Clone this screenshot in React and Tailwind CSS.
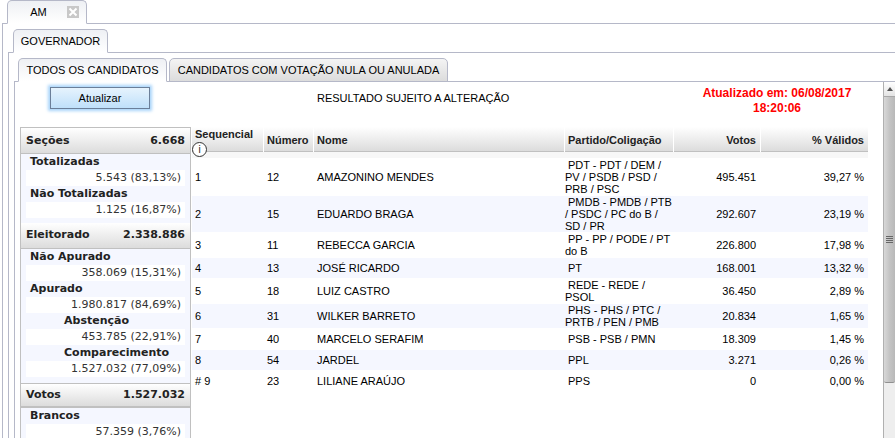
import React from 'react';

const sans = "font-['Liberation_Sans',Arial,sans-serif]";
const headGrad = 'bg-gradient-to-b from-white to-[#dcdcdc]';

const candidatos = [
  { seq: '1', num: '12', nome: 'AMAZONINO MENDES', partido: 'PDT - PDT / DEM / PV / PSDB / PSD / PRB / PSC', votos: '495.451', pct: '39,27 %', h: 'h-[38px]' },
  { seq: '2', num: '15', nome: 'EDUARDO BRAGA', partido: 'PMDB - PMDB / PTB / PSDC / PC do B / SD / PR', votos: '292.607', pct: '23,19 %', h: 'h-[36px]' },
  { seq: '3', num: '11', nome: 'REBECCA GARCIA', partido: 'PP - PP / PODE / PT do B', votos: '226.800', pct: '17,98 %', h: 'h-[26px]' },
  { seq: '4', num: '13', nome: 'JOSÉ RICARDO', partido: 'PT', votos: '168.001', pct: '13,32 %', h: 'h-[20px]' },
  { seq: '5', num: '18', nome: 'LUIZ CASTRO', partido: 'REDE - REDE / PSOL', votos: '36.450', pct: '2,89 %', h: 'h-[26px]' },
  { seq: '6', num: '31', nome: 'WILKER BARRETO', partido: 'PHS - PHS / PTC / PRTB / PEN / PMB', votos: '20.834', pct: '1,65 %', h: 'h-[24px]' },
  { seq: '7', num: '40', nome: 'MARCELO SERAFIM', partido: 'PSB - PSB / PMN', votos: '18.309', pct: '1,45 %', h: 'h-[22px]' },
  { seq: '8', num: '54', nome: 'JARDEL', partido: 'PPL', votos: '3.271', pct: '0,26 %', h: 'h-[20px]' },
  { seq: '# 9', num: '23', nome: 'LILIANE ARAÚJO', partido: 'PPS', votos: '0', pct: '0,00 %', h: 'h-[22px]' },
];

const cols = 'grid grid-cols-[71px_49px_250px_108px_86px_107px] gap-x-px';

const Tab = ({ children, active, className = '' }) => (
  <div
    className={`flex items-center justify-center rounded-t-[5px] border border-[#b5b8c8] ${
      active ? 'border-b-white bg-gradient-to-b from-[#eef0f4] to-white' : 'bg-gradient-to-b from-[#f4f4f4] to-[#dcdcdc]'
    } ${className}`}
  >
    {children}
  </div>
);

const PanelHead = ({ label, value, className = 'h-[26px]' }) => (
  <div className={`flex items-center justify-between border-b border-[#c0c0c0] px-[5px] text-[11px] font-bold text-[#222] ${headGrad} ${className}`}>
    <span>{label}</span>
    <span>{value}</span>
  </div>
);

const Stat = ({ label, value, indent }) => (
  <div>
    <div className={`h-[16px] text-[11px] font-bold leading-[16px] text-[#222] ${indent ? 'pl-[43px]' : 'pl-[9px]'}`}>{label}</div>
    <div className="mx-[5px] h-[16px] bg-white pr-[4px] text-right text-[11px] leading-[16px] text-[#333]">{value}</div>
  </div>
);

const Scrollbar = () => (
  <div className="flex w-[12px] shrink-0 flex-col border-l border-[#b0b0b0] bg-[#eeeeee]">
    <div className="flex h-[15px] items-center justify-center border-b border-[#a8a8a8] bg-gradient-to-b from-white to-[#e4e4e4]">
      <div className="h-0 w-0 border-x-[3px] border-b-[4px] border-x-transparent border-b-[#555]" />
    </div>
    <div className="flex h-[286px] items-center justify-center rounded-b-[2px] border-b border-[#909090] bg-gradient-to-r from-[#d8d8d8] via-[#c4c4c4] to-[#b8b8b8]">
      <div className="flex w-[7px] flex-col gap-px">
        <div className="h-px bg-[#666]" />
        <div className="h-px bg-[#666]" />
        <div className="h-px bg-[#666]" />
        <div className="h-px bg-[#666]" />
      </div>
    </div>
  </div>
);

export default function App() {
  return (
    <div className={`h-[438px] w-[895px] overflow-hidden bg-white text-[11px] text-black ${sans}`}>
      {/* aba do estado */}
      <div className="relative z-10 -mb-px flex pl-[7px]">
        <Tab active className="h-[24px] w-[80px] gap-[20px] pl-[15px] text-[11px]">
          <span>AM</span>
          <span className="flex h-[12px] w-[12px] items-center justify-center bg-[#c8c8c8]">
            <svg width="10" height="10" viewBox="0 0 10 10">
              <path d="M1.5 1.5l7 7M8.5 1.5l-7 7" stroke="#fff" strokeWidth="2" />
            </svg>
          </span>
        </Tab>
      </div>

      <div className="ml-[2px] border-l border-t border-[#b5b8c8] pl-[5px] pt-[5px]">
        <div className="relative z-10 -mb-px flex pl-[5px]">
          <Tab active className="h-[24px] w-[95px]">GOVERNADOR</Tab>
        </div>

        <div className="h-[400px] border-l border-t border-[#b5b8c8] pl-[5px] pt-[5px]">
          <div className="relative z-10 -mb-px flex gap-[2px] pl-[4px]">
            <Tab active className="h-[24px] w-[149px]">TODOS OS CANDIDATOS</Tab>
            <Tab className="h-[24px] w-[279px]">CANDIDATOS COM VOTAÇÃO NULA OU ANULADA</Tab>
          </div>

          <div className="flex h-[360px] border-l border-t border-[#b5b8c8]">
            <div className="min-w-0 flex-1">
              {/* barra superior */}
              <div className="flex h-[45px] items-start">
                <div className="ml-[35px] mt-[5px] flex h-[22px] w-[100px] items-center justify-center border border-[#6b7f99] bg-gradient-to-b from-[#e6f3fd] to-[#bfe0fa] shadow-[0_0_3px_2px_#a8d4fa]">
                  Atualizar
                </div>
                <div className="ml-[167px] mt-[9px] w-[300px] text-[11px] leading-[14px]">RESULTADO SUJEITO A ALTERAÇÃO</div>
                <div className="ml-[70px] mt-[4px] w-[180px] text-center text-[12px] font-bold leading-[15px] text-[#ff0000]">
                  Atualizado em: 06/08/2017
                  <br />
                  18:20:06
                </div>
              </div>

              <div className="flex pl-[5px]">
                {/* painel de totais */}
                <div className="h-[320px] w-[171px] shrink-0 border border-[#c0c0c0] bg-[#f5f7ff] font-['DejaVu_Sans',Verdana,sans-serif]">
                  <PanelHead label="Seções" value="6.668" className="h-[26px] pt-[2px]" />
                  <Stat label="Totalizadas" value="5.543 (83,13%)" />
                  <Stat label="Não Totalizadas" value="1.125 (16,87%)" />
                  <div className="h-[5px]" />
                  <PanelHead label="Eleitorado" value="2.338.886" />
                  <Stat label="Não Apurado" value="358.069 (15,31%)" />
                  <Stat label="Apurado" value="1.980.817 (84,69%)" />
                  <Stat indent label="Abstenção" value="453.785 (22,91%)" />
                  <Stat indent label="Comparecimento" value="1.527.032 (77,09%)" />
                  <div className="h-[6px]" />
                  <div className="-mx-px border border-[#c0c0c0]">
                    <PanelHead label="Votos" value="1.527.032" className="h-[23px]" />
                  </div>
                  <Stat label="Brancos" value="57.359 (3,76%)" />
                </div>

                {/* tabela de candidatos */}
                <div className="ml-[1px] min-w-0">
                  <div className={`${cols} h-[25px] font-bold text-[#222]`}>
                    <div className={`relative z-10 border-b border-[#c0c0c0] pl-[3px] ${headGrad}`}>
                      <div className="absolute left-[3px] top-px text-[11px] font-bold leading-[12px]">Sequencial</div>
                      <div className="absolute left-0 top-[15px] flex h-[15px] w-[15px] items-center justify-center rounded-full border border-[#333] bg-white text-[10px] font-normal leading-none">i</div>
                    </div>
                    <div className={`flex items-end border-b border-[#c0c0c0] pb-[3px] pl-[3px] ${headGrad}`}>Número</div>
                    <div className={`flex items-end border-b border-[#c0c0c0] pb-[3px] pl-[3px] ${headGrad}`}>Nome</div>
                    <div className={`flex items-end border-b border-[#c0c0c0] pb-[3px] pl-[3px] ${headGrad}`}>Partido/Coligação</div>
                    <div className={`flex items-end justify-end border-b border-[#c0c0c0] pb-[3px] pr-[4px] ${headGrad}`}>Votos</div>
                    <div className={`flex items-end justify-end border-b border-[#c0c0c0] pb-[3px] pr-[4px] ${headGrad}`}>% Válidos</div>
                  </div>
                  <div className="h-[6px] bg-[#f7f7f7]" />
                  {candidatos.map((c, i) => (
                    <div key={c.num} className={`${cols} ${c.h} items-center leading-[12px] ${i % 2 ? 'bg-[#f5f7ff]' : 'bg-white'}`}>
                      <div className="pl-[3px]">{c.seq}</div>
                      <div className="pl-[3px]">{c.num}</div>
                      <div className="pl-[3px]">{c.nome}</div>
                      <div className="indent-[3px]">{c.partido}</div>
                      <div className="pr-[4px] text-right">{c.votos}</div>
                      <div className="pr-[4px] text-right">{c.pct}</div>
                    </div>
                  ))}
                </div>
              </div>
            </div>
            <Scrollbar />
          </div>
        </div>
      </div>
    </div>
  );
}
